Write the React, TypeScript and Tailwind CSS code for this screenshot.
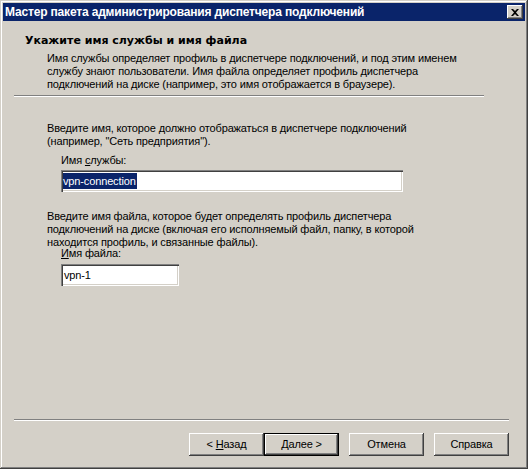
export default function App() {
  const raised =
    "shadow-[inset_-1px_-1px_#404040,inset_1px_1px_#ffffff,inset_-2px_-2px_#808080,inset_2px_2px_#d4d0c8]";
  const sunken =
    "shadow-[inset_1px_1px_#808080,inset_2px_2px_#404040,inset_-1px_-1px_#ffffff,inset_-2px_-2px_#d4d0c8]";
  return (
    <div className="w-[528px] h-[469px] bg-[#d4d0c8] flex flex-col p-[3px] shadow-[inset_-1px_-1px_#404040,inset_1px_1px_#d4d0c8,inset_-2px_-2px_#808080,inset_2px_2px_#ffffff] font-['Liberation_Sans',Arial,sans-serif] text-[11px] leading-[13px] tracking-[-0.14px] text-black select-none">
      {/* Title bar */}
      <div className="h-[18px] bg-[#0a246a] flex items-center justify-between pl-[2px] pr-[2px] shrink-0">
        <span className="text-white font-bold text-[12px] leading-[14px] tracking-[-0.17px]">
          Мастер пакета администрирования диспетчера подключений
        </span>
        <div className={`w-[16px] h-[14px] bg-[#d4d0c8] flex items-center justify-center ${raised}`}>
          <svg width="8" height="7" viewBox="0 0 8 7">
            <path d="M0 0H2L4 2L6 0H8L5 3.5L8 7H6L4 5L2 7H0L3 3.5Z" fill="#000" />
          </svg>
        </div>
      </div>

      {/* Header */}
      <div className="mt-[13px] pl-[22px] font-bold text-[11px] tracking-[0px] font-['DejaVu_Sans','Liberation_Sans',sans-serif]">
        Укажите имя службы и имя файла
      </div>
      <div className="mt-[5px] pl-[44px]">
        Имя службы определяет профиль в диспетчере подключений, и под этим именем
        <br />
        службу знают пользователи. Имя файла определяет профиль диспетчера
        <br />
        подключений на диске (например, это имя отображается в браузере).
      </div>
      <div className="mt-[4px] ml-[11px] w-[470px] h-[2px] border-t border-t-[#808080] border-b border-b-white" />

      {/* Body */}
      <div className="mt-[25px] pl-[44px]">
        Введите имя, которое должно отображаться в диспетчере подключений
        <br />
        (например, "Сеть предприятия").
      </div>
      <div className="mt-[6px] pl-[58px]">
        Имя <span className="underline">с</span>лужбы:
      </div>
      <div className={`mt-[3px] ml-[58px] w-[342px] h-[22px] bg-white flex items-center pl-[2px] ${sunken}`}>
        <span className="bg-[#0a246a] text-white leading-[16px] pr-[1px]">vpn-connection</span>
      </div>

      <div className="mt-[18px] pl-[44px]">
        Введите имя файла, которое будет определять профиль диспетчера
        <br />
        подключений на диске (включая его исполняемый файл, папку, в которой
        <br />
        находится профиль, и связанные файлы).
      </div>
      <div className="mt-[-2px] pl-[58px]">
        <span className="underline">И</span>мя файла:
      </div>
      <div className={`mt-[4px] ml-[58px] w-[118px] h-[22px] bg-white flex items-center pl-[3px] ${sunken}`}>
        vpn-1
      </div>

      <div className="flex-1" />

      {/* Footer */}
      <div className="ml-[11px] w-[495px] h-[2px] border-t border-t-[#808080] border-b border-b-white" />
      <div className="mt-[12px] mb-[10px] flex justify-end pr-[16px]">
        <button className={`w-[75px] h-[23px] bg-[#d4d0c8] ${raised}`}>
          &lt; <span className="underline">Н</span>азад
        </button>
        <button className="w-[75px] h-[23px] bg-[#d4d0c8] border border-black p-0">
          <div className={`w-full h-full flex items-center justify-center ${raised}`}>
            <span>
              <span className="underline">Д</span>алее &gt;
            </span>
          </div>
        </button>
        <button className={`ml-[10px] w-[75px] h-[23px] bg-[#d4d0c8] ${raised}`}>Отмена</button>
        <button className={`ml-[10px] w-[75px] h-[23px] bg-[#d4d0c8] ${raised}`}>Справка</button>
      </div>
    </div>
  );
}
